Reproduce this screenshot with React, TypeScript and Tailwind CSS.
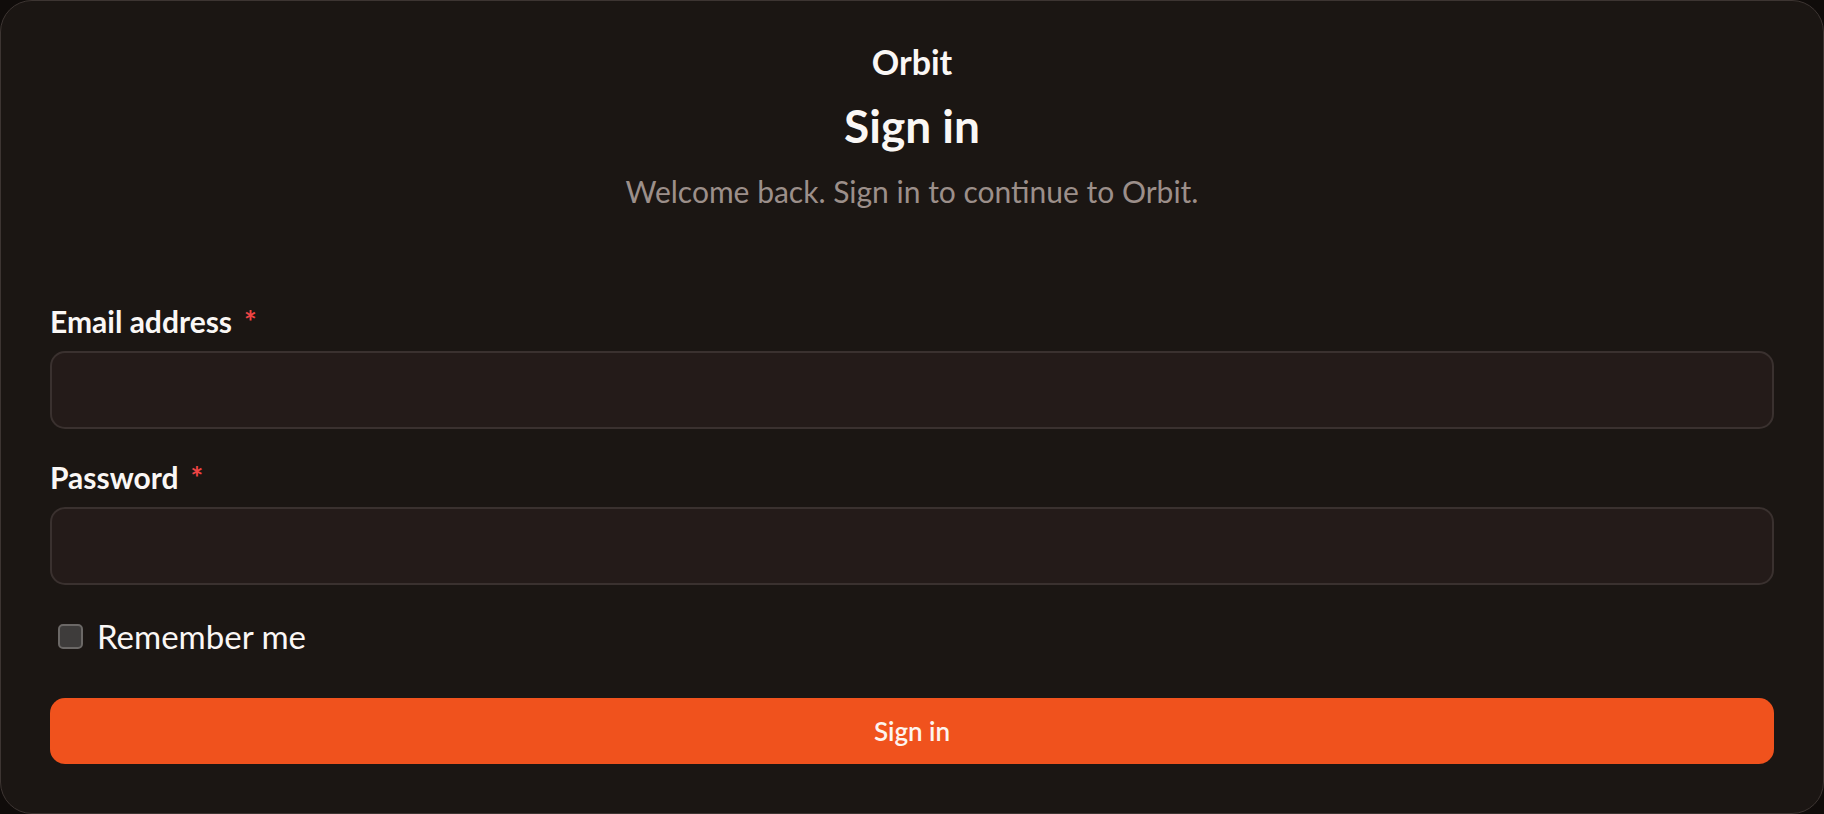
import React, { useState } from 'react';

const font = { fontFamily: 'Lato, "Noto Sans", sans-serif' };

function Field({ label, type }: { label: string; type: string }) {
  return (
    <div className="flex flex-col">
      <label className="flex items-start text-[30px] leading-[28px] font-bold text-[#faf7f5]">
        {label}
        <span className="ml-[12px] text-[#ef4444]">*</span>
      </label>
      <input
        type={type}
        className="mt-[16px] h-[78px] w-full rounded-[15px] border-2 border-[#3a312f] bg-[#241b19] px-5 text-[26px] text-[#faf7f5] outline-none"
      />
    </div>
  );
}

export default function App() {
  const [remember, setRemember] = useState(false);

  return (
    <div className="h-[814px] w-full bg-[#100c0a]" style={font}>
      <div className="flex h-[814px] flex-col rounded-[32px] border border-[#3d3532] bg-[#1b1613] px-[49px] pt-[44px]">
        <div className="text-center text-[34px] leading-[33px] font-bold text-[#faf7f5]">Orbit</div>
        <h1 className="mt-[25px] text-center text-[46px] leading-[46px] font-bold text-[#faf7f5]">Sign in</h1>
        <p className="mt-[28px] text-center text-[30px] leading-[28px] text-[#9c8f8a]">
          Welcome back. Sign in to continue to Orbit.
        </p>

        <div className="mt-[102px]">
          <Field label="Email address" type="email" />
        </div>
        <div className="mt-[34px]">
          <Field label="Password" type="password" />
        </div>

        <label className="mt-[36px] flex h-[31px] cursor-pointer items-center">
          <span
            onClick={() => setRemember(!remember)}
            className="ml-[8px] h-[25px] w-[25px] rounded-[5px] border-2 border-[#6b6866] bg-[#3e3c3b]"
          />
          <span className="ml-[14px] text-[33px] leading-[31px] text-[#faf7f5]">Remember me</span>
        </label>

        <button className="mt-[46px] h-[66px] w-full rounded-[15px] bg-[#f0521d] text-[26px] leading-[24px] font-semibold text-[#fdf4ef]">
          Sign in
        </button>
      </div>
    </div>
  );
}
